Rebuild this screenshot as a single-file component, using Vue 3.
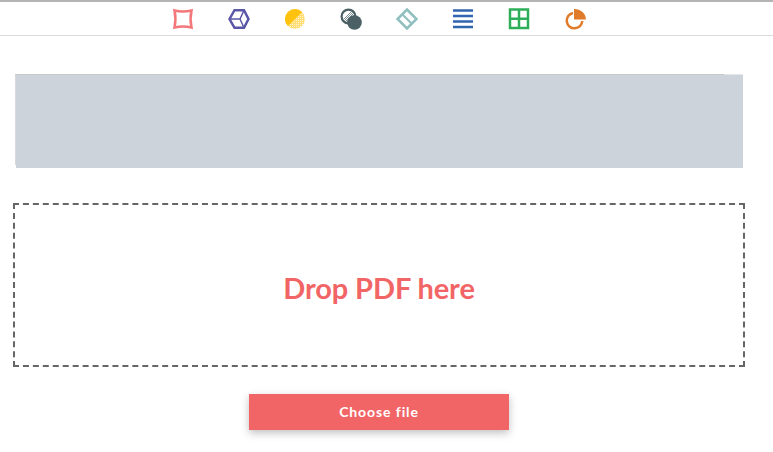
<script setup>
const stroke = 2.5
</script>

<template>
  <div class="page">
    <nav class="toolbar" aria-label="Tools">
      <svg class="tool" viewBox="0 0 22 22" aria-hidden="true">
        <path d="M2.5 2.5Q11 4.4 19.5 2.5Q17.6 11 19.5 19.5Q11 17.6 2.5 19.5Q4.4 11 2.5 2.5Z" fill="none" stroke="#f4777a" :stroke-width="stroke" />
      </svg>
      <svg class="tool" viewBox="0 0 22 22" aria-hidden="true">
        <path d="M1.5 11L6.5 2.2H16L20.5 11L16 19.8H6.5Z" fill="none" stroke="#5a56a8" :stroke-width="stroke" />
        <path d="M1.5 11H12L16 2.2M12 11L16 19.8" fill="none" stroke="#5a56a8" stroke-width="1.5" />
      </svg>
      <svg class="tool" viewBox="0 0 22 22" aria-hidden="true">
        <defs>
          <pattern id="hatch-y" width="2" height="2" patternUnits="userSpaceOnUse">
            <rect width="2" height="2" fill="#ffdc70" />
            <rect width="1" height="1" fill="#fff6d6" />
          </pattern>
          <pattern id="hatch-d" width="2" height="2" patternUnits="userSpaceOnUse">
            <rect width="2" height="2" fill="#fff" />
            <rect width="1" height="1" fill="#7d8f93" />
            <rect x="1" y="1" width="1" height="1" fill="#7d8f93" />
          </pattern>
        </defs>
        <circle cx="11" cy="11" r="10" fill="url(#hatch-y)" />
        <path d="M3.9 18.1A10 10 0 0 1 18.1 3.9Z" fill="#ffc20e" />
      </svg>
      <svg class="tool" viewBox="0 0 22 22" aria-hidden="true">
        <circle cx="8.5" cy="8.5" r="6" fill="#fff" />
        <path d="M10.8 3.2A5.8 5.8 0 1 1 3.2 10.8Z" fill="url(#hatch-d)" />
        <circle cx="14.5" cy="14.5" r="7.3" fill="#4a6065" />
        <circle cx="8.5" cy="8.5" r="6.9" fill="none" stroke="#4a6065" stroke-width="2.2" />
      </svg>
      <svg class="tool" viewBox="0 0 22 22" aria-hidden="true">
        <path d="M11 1.5L20.5 11L11 20.5L1.5 11Z" fill="none" stroke="#8fbfbf" :stroke-width="stroke" />
        <path d="M6.2 6.2L15.8 15.8" fill="none" stroke="#8fbfbf" stroke-width="2" />
      </svg>
      <svg class="tool" viewBox="0 0 22 22" aria-hidden="true">
        <path d="M1 2.5H21M1 8H21M1 13.5H21M1 19H21" fill="none" stroke="#2f66ae" stroke-width="2.4" />
      </svg>
      <svg class="tool" viewBox="0 0 22 22" aria-hidden="true">
        <path d="M2 1.5H20V20H2ZM11 1.5V20M2 10.8H20" fill="none" stroke="#2fae5a" :stroke-width="stroke" />
      </svg>
      <svg class="tool" viewBox="0 0 22 22" aria-hidden="true">
        <path d="M9 4.9A7.8 7.8 0 1 0 18.3 13" fill="none" stroke="#e07b2a" :stroke-width="stroke" />
        <path d="M10 1A11 11 0 0 1 22 11.5H10Z" fill="#e07b2a" />
      </svg>
    </nav>

    <main class="content">
      <div class="preview"></div>

      <div class="dropzone">
        <span class="dropzone__label">Drop PDF here</span>
      </div>

      <button class="choose" type="button">Choose file</button>
    </main>
  </div>
</template>

<style scoped>
.page {
  width: 773px;
  height: 452px;
  overflow: hidden;
  background: #fff;
  border-top: 2px solid #b4b4b4;
  box-sizing: border-box;
  font-family: Lato, "Noto Sans", sans-serif;
}

.toolbar {
  height: 34px;
  box-sizing: border-box;
  padding: 6px 15px 0 0;
  display: flex;
  justify-content: center;
  align-items: flex-start;
  gap: 34px;
  border-bottom: 1px solid #dcdcdc;
}

.tool {
  display: block;
  width: 22px;
  height: 22px;
  flex: none;
}

.content {
  width: 758px;
  box-sizing: border-box;
  padding: 38px 13px 0;
  display: flex;
  flex-direction: column;
  align-items: center;
}

.preview {
  align-self: stretch;
  margin: 0 2px 0 2px;
  height: 94px;
  background:
    linear-gradient(to right, #c9c9c9 0, #c9c9c9 709px, #e6e6e6 709px) top left / 100% 1px no-repeat,
    linear-gradient(#d6d9dd, #d6d9dd) top left / 1px 91px no-repeat,
    linear-gradient(#fff, #fff) bottom left / 1px 3px no-repeat,
    #ccd3da;
}

.dropzone {
  align-self: stretch;
  margin-top: 35px;
  height: 164px;
  box-sizing: border-box;
  padding-top: 5px;
  border: 2px dashed #666;
  display: flex;
  align-items: center;
  justify-content: center;
}

.dropzone__label {
  font-size: 29px;
  font-weight: 700;
  letter-spacing: -0.1px;
  color: #f26566;
}

.choose {
  margin-top: 27px;
  width: 260px;
  height: 36px;
  padding: 0 0 2px;
  border: 0;
  background: #f26566;
  color: #fff;
  font-family: inherit;
  font-size: 14px;
  font-weight: 700;
  letter-spacing: 0.9px;
  box-shadow: 0 3px 8px rgba(0, 0, 0, 0.25);
}
</style>
